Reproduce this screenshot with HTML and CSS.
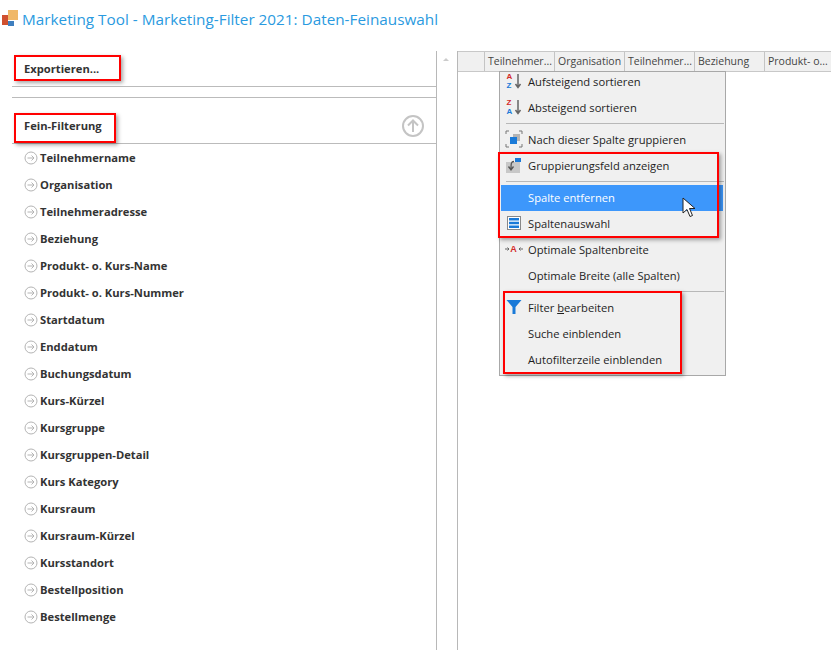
FILE: index.html
```html
<!DOCTYPE html>
<html lang="de">
<head>
<meta charset="utf-8">
<title>Marketing Tool</title>
<link rel="stylesheet" href="styles.css">
</head>
<body>
<header class="title-bar">
  <svg class="logo" width="18" height="18" viewBox="0 0 18 18"><rect x="0" y="5" width="6" height="10" fill="#d0502f"/><rect x="6" y="0" width="10" height="10" fill="#f0b868"/><rect x="6" y="11" width="6" height="5" fill="#3f7fbf"/></svg>
  <h1 class="title">Marketing Tool - Marketing-Filter 2021: Daten-Feinauswahl</h1>
</header>
<main class="main">
  <section class="left">
    <div class="export-head">Exportieren...</div>
    <div class="spacer"></div>
    <div class="filter-head">
      <span>Fein-Filterung</span>
      <svg width="22" height="22" viewBox="0 0 22 22" fill="none" stroke="#c4c4c4" stroke-width="2"><circle cx="11" cy="11" r="10"/><path d="M11 17V6M6 10.500l5-5 5 5"/></svg>
    </div>
    <ul class="fields">
      <li><svg class="ai" width="14" height="14" viewBox="0 0 14 14" fill="none" stroke="#b4b4b4"><circle cx="7" cy="7" r="6"/><path d="M3.500 7h6.500M7.500 4.500L10 7l-2.500 2.500"/></svg>Teilnehmername</li>
      <li><svg class="ai" width="14" height="14" viewBox="0 0 14 14" fill="none" stroke="#b4b4b4"><circle cx="7" cy="7" r="6"/><path d="M3.500 7h6.500M7.500 4.500L10 7l-2.500 2.500"/></svg>Organisation</li>
      <li><svg class="ai" width="14" height="14" viewBox="0 0 14 14" fill="none" stroke="#b4b4b4"><circle cx="7" cy="7" r="6"/><path d="M3.500 7h6.500M7.500 4.500L10 7l-2.500 2.500"/></svg>Teilnehmeradresse</li>
      <li><svg class="ai" width="14" height="14" viewBox="0 0 14 14" fill="none" stroke="#b4b4b4"><circle cx="7" cy="7" r="6"/><path d="M3.500 7h6.500M7.500 4.500L10 7l-2.500 2.500"/></svg>Beziehung</li>
      <li><svg class="ai" width="14" height="14" viewBox="0 0 14 14" fill="none" stroke="#b4b4b4"><circle cx="7" cy="7" r="6"/><path d="M3.500 7h6.500M7.500 4.500L10 7l-2.500 2.500"/></svg>Produkt- o. Kurs-Name</li>
      <li><svg class="ai" width="14" height="14" viewBox="0 0 14 14" fill="none" stroke="#b4b4b4"><circle cx="7" cy="7" r="6"/><path d="M3.500 7h6.500M7.500 4.500L10 7l-2.500 2.500"/></svg>Produkt- o. Kurs-Nummer</li>
      <li><svg class="ai" width="14" height="14" viewBox="0 0 14 14" fill="none" stroke="#b4b4b4"><circle cx="7" cy="7" r="6"/><path d="M3.500 7h6.500M7.500 4.500L10 7l-2.500 2.500"/></svg>Startdatum</li>
      <li><svg class="ai" width="14" height="14" viewBox="0 0 14 14" fill="none" stroke="#b4b4b4"><circle cx="7" cy="7" r="6"/><path d="M3.500 7h6.500M7.500 4.500L10 7l-2.500 2.500"/></svg>Enddatum</li>
      <li><svg class="ai" width="14" height="14" viewBox="0 0 14 14" fill="none" stroke="#b4b4b4"><circle cx="7" cy="7" r="6"/><path d="M3.500 7h6.500M7.500 4.500L10 7l-2.500 2.500"/></svg>Buchungsdatum</li>
      <li><svg class="ai" width="14" height="14" viewBox="0 0 14 14" fill="none" stroke="#b4b4b4"><circle cx="7" cy="7" r="6"/><path d="M3.500 7h6.500M7.500 4.500L10 7l-2.500 2.500"/></svg>Kurs-Kürzel</li>
      <li><svg class="ai" width="14" height="14" viewBox="0 0 14 14" fill="none" stroke="#b4b4b4"><circle cx="7" cy="7" r="6"/><path d="M3.500 7h6.500M7.500 4.500L10 7l-2.500 2.500"/></svg>Kursgruppe</li>
      <li><svg class="ai" width="14" height="14" viewBox="0 0 14 14" fill="none" stroke="#b4b4b4"><circle cx="7" cy="7" r="6"/><path d="M3.500 7h6.500M7.500 4.500L10 7l-2.500 2.500"/></svg>Kursgruppen-Detail</li>
      <li><svg class="ai" width="14" height="14" viewBox="0 0 14 14" fill="none" stroke="#b4b4b4"><circle cx="7" cy="7" r="6"/><path d="M3.500 7h6.500M7.500 4.500L10 7l-2.500 2.500"/></svg>Kurs Kategory</li>
      <li><svg class="ai" width="14" height="14" viewBox="0 0 14 14" fill="none" stroke="#b4b4b4"><circle cx="7" cy="7" r="6"/><path d="M3.500 7h6.500M7.500 4.500L10 7l-2.500 2.500"/></svg>Kursraum</li>
      <li><svg class="ai" width="14" height="14" viewBox="0 0 14 14" fill="none" stroke="#b4b4b4"><circle cx="7" cy="7" r="6"/><path d="M3.500 7h6.500M7.500 4.500L10 7l-2.500 2.500"/></svg>Kursraum-Kürzel</li>
      <li><svg class="ai" width="14" height="14" viewBox="0 0 14 14" fill="none" stroke="#b4b4b4"><circle cx="7" cy="7" r="6"/><path d="M3.500 7h6.500M7.500 4.500L10 7l-2.500 2.500"/></svg>Kursstandort</li>
      <li><svg class="ai" width="14" height="14" viewBox="0 0 14 14" fill="none" stroke="#b4b4b4"><circle cx="7" cy="7" r="6"/><path d="M3.500 7h6.500M7.500 4.500L10 7l-2.500 2.500"/></svg>Bestellposition</li>
      <li><svg class="ai" width="14" height="14" viewBox="0 0 14 14" fill="none" stroke="#b4b4b4"><circle cx="7" cy="7" r="6"/><path d="M3.500 7h6.500M7.500 4.500L10 7l-2.500 2.500"/></svg>Bestellmenge</li>
    </ul>
  </section>
  <div class="gutter"><span class="scroll-up"></span></div>
  <section class="grid">
    <div class="grid-head">
      <div class="hc first"></div>
      <div class="hc">Teilnehmer...</div>
      <div class="hc">Organisation</div>
      <div class="hc">Teilnehmer...</div>
      <div class="hc">Beziehung</div>
      <div class="hc">Produkt- o...</div>
    </div>
  </section>
</main>

<nav class="menu">
  <div class="mi"><span class="mic"><svg width="18" height="18" viewBox="0 0 18 18"><text x="1.500" y="6.500" class="az red">A</text><text x="1.500" y="16" class="az blue">Z</text><path d="M13 2v13M10.500 12l2.500 3.500 2.500-3.500" fill="none" stroke="#666" stroke-width="1.500"/></svg></span>Aufsteigend sortieren</div>
  <div class="mi"><span class="mic"><svg width="18" height="18" viewBox="0 0 18 18"><text x="1.500" y="6.500" class="az red">Z</text><text x="1.500" y="16" class="az blue">A</text><path d="M13 2v13M10.500 12l2.500 3.500 2.500-3.500" fill="none" stroke="#666" stroke-width="1.500"/></svg></span>Absteigend sortieren</div>
  <div class="sep"></div>
  <div class="mi"><span class="mic"><svg width="18" height="18" viewBox="0 0 18 18"><path d="M1 4V1h3M14 1h3v3M1 14v3h3M14 17h3v-3" fill="none" stroke="#777"/><rect x="8" y="4" width="7" height="7" fill="#b4b4b4"/><rect x="5" y="7" width="7" height="7" fill="#1a7ad8"/></svg></span>Nach dieser Spalte gruppieren</div>
  <div class="mi"><span class="mic"><svg width="18" height="18" viewBox="0 0 18 18"><rect x="1" y="6" width="14" height="11" fill="#c8c8c8"/><rect x="10" y="2" width="6" height="4" fill="#1a7ad8"/><path d="M9 5.500C6 5.500 6 8 6 13M3.500 10.500L6 14l2.500-3.500" fill="none" stroke="#555" stroke-width="1.300"/></svg></span>Gruppierungsfeld anzeigen</div>
  <div class="sep"></div>
  <div class="mi active"><span class="mic"></span>Spalte entfernen</div>
  <div class="mi"><span class="mic"><svg width="14" height="14" viewBox="0 0 14 14"><rect x=".5" y=".5" width="13" height="13" fill="#fff" stroke="#888"/><rect x="2" y="2" width="10" height="2.500" fill="#1a7ad8"/><rect x="2" y="5.750" width="10" height="2.500" fill="#1a7ad8"/><rect x="2" y="9.500" width="10" height="2.500" fill="#1a7ad8"/></svg></span>Spaltenauswahl</div>
  <div class="mi"><span class="mic"><svg width="18" height="18" viewBox="0 0 18 18"><path d="M0 9h4M2.500 7.500L4 9l-1.500 1.500M18 9h-4M15.500 7.500L14 9l1.500 1.500" fill="none" stroke="#666"/><text x="5.300" y="12" class="az big red">A</text></svg></span>Optimale Spaltenbreite</div>
  <div class="mi"><span class="mic"></span>Optimale Breite (alle Spalten)</div>
  <div class="sep"></div>
  <div class="mi"><span class="mic"><svg width="16" height="16" viewBox="0 0 16 16"><path d="M.5 1h15L9.500 8v7h-3V8z" fill="#1a7ad8"/></svg></span><span>Filter <u>b</u>earbeiten</span></div>
  <div class="mi"><span class="mic"></span>Suche einblenden</div>
  <div class="mi"><span class="mic"></span>Autofilterzeile einblenden</div>
</nav>

<svg class="cursor" width="15" height="21" viewBox="0 0 15 21"><path d="M1 1v15l4-3.500 3 7 2.500-1-3-7h5.500z" fill="#fff" stroke="#222"/></svg>

<div class="mark m1"></div>
<div class="mark m2"></div>
<div class="mark m3"></div>
<div class="mark m4"></div>
</body>
</html>
```
FILE: styles.css
```css
* { box-sizing: border-box; }
html, body { margin: 0; padding: 0; }
body {
  width: 831px;
  height: 650px;
  overflow: hidden;
  background: #fff;
  position: relative;
  font-family: "Open Sans", "Noto Sans", sans-serif;
  color: #222;
}
.title-bar {
  height: 51px;
  display: flex;
  align-items: flex-start;
  padding: 10px 0 0 2px;
  gap: 2px;
}
.logo { flex: none; }
.title {
  margin: -1px 0 0;
  font-size: 15.300px;
  font-weight: 400;
  line-height: 20px;
  color: #2a9ae0;
  white-space: nowrap;
}
.main { display: flex; height: 599px; }
.left {
  width: 437px;
  padding-left: 12px;
  border-right: 1px solid #b8b8b8;
  font-family: "Open Sans", "Noto Sans", sans-serif;
  font-weight: 700;
  font-size: 11.200px;
  color: #333;
}
.export-head {
  height: 36px;
  padding: 11px 0 0 12px;
  line-height: 14px;
  border-bottom: 1px solid #bbb;
}
.spacer { height: 11px; border-bottom: 1px solid #bbb; }
.filter-head {
  height: 46px;
  display: flex;
  justify-content: space-between;
  align-items: flex-start;
  padding: 17px 12px 0 12px;
  border-bottom: 1px solid #bbb;
}
.filter-head span { margin-top: 4px; line-height: 14px; }
.fields { list-style: none; margin: 0; padding: 0 0 0 12px; }
.fields li {
  height: 27px;
  display: flex;
  align-items: center;
  gap: 2px;
  color: #333;
}
.ai { flex: none; margin-top: 1px; }
.gutter { width: 21px; border-right: 1px solid #b8b8b8; position: relative; padding: 7px 0 0 6px; }
.scroll-up {
  display: block;
  width: 0;
  height: 0;
  border-left: 3px solid transparent;
  border-right: 3px solid transparent;
  border-bottom: 3px solid #ccc;
}
.grid { flex: 1; min-width: 0; }
.grid-head {
  display: grid;
  grid-template-columns: 27px repeat(4, 70px) 1fr;
  height: 21px;
  background: #f0f0f0;
  border-top: 1px solid #c8c8c8;
  border-bottom: 1px solid #c8c8c8;
  font-size: 10.500px;
  line-height: 18px;
  color: #444;
}
.hc { padding-left: 3px; border-right: 1px solid #c4c4c4; white-space: nowrap; overflow: hidden; }
.hc:last-child { border-right: 0; }
.menu {
  position: absolute;
  left: 499px;
  top: 71px;
  width: 227px;
  height: 305px;
  background: #f0f0f0;
  border: 1px solid #a8a8a8;
  padding: 0 1px;
  font-size: 11.200px;
  color: #1e1e1e;
}
.mi {
  height: 26px;
  display: flex;
  align-items: center;
  padding-bottom: 2px;
  white-space: nowrap;
}
.mi:first-child { margin-top: -3px; }
.mic {
  width: 27px;
  flex: none;
  display: flex;
  justify-content: center;
  align-items: center;
  padding-right: 2px;
}
.az { font-family: "Liberation Sans", sans-serif; font-size: 8px; font-weight: 700; }
.big { font-size: 9px; }
.red { fill: #d42a2a; }
.blue { fill: #1a7ad8; }
.sep { height: 1px; margin: 2px 0 3px 5px; background: #b8b8b8; }
.active { background: #3d97fb; color: #fff; margin-right: 1px; }
.cursor { position: absolute; left: 682px; top: 197px; }
.mark {
  position: absolute;
  border: 2px solid #f00;
  box-shadow: 2px 2px 4px rgba(0, 0, 0, .35);
}
.m1 { left: 14px; top: 55px; width: 107px; height: 26px; }
.m2 { left: 14px; top: 113px; width: 102px; height: 30px; }
.m3 { left: 498px; top: 152px; width: 221px; height: 86px; }
.m4 { left: 503px; top: 291px; width: 179px; height: 83px; }
```
